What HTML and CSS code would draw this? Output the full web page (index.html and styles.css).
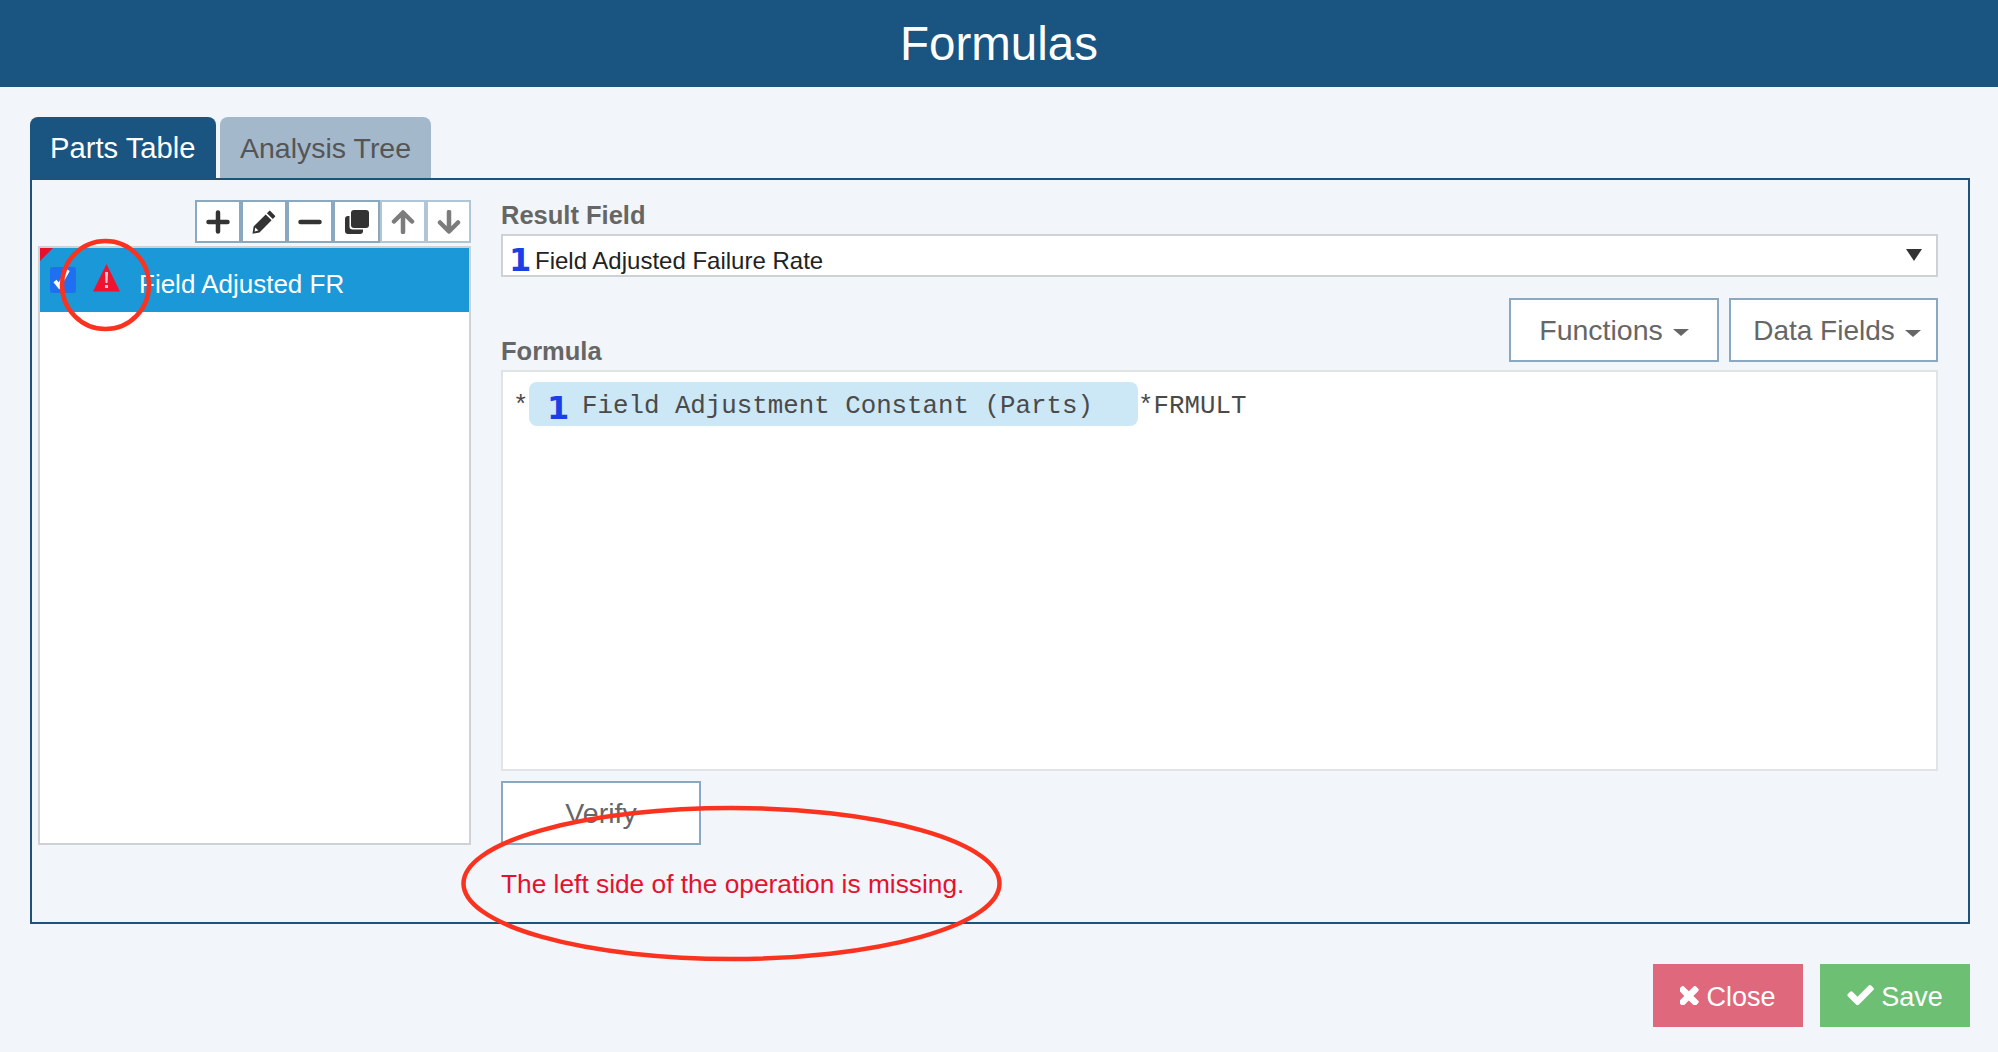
FILE: index.html
```html
<!DOCTYPE html>
<html lang="en">
<head>
<meta charset="utf-8">
<title>Formulas</title>
<link rel="stylesheet" href="styles.css">
</head>
<body>
<header class="title-bar">Formulas</header>
<main class="content">
  <nav class="tabs">
    <div class="tab tab-active">Parts Table</div>
    <div class="tab tab-second">Analysis Tree</div>
  </nav>
  <section class="panel">
    <div class="left-col">
      <div class="toolbar">
        <div class="tool"><svg class="tool-icon" viewBox="0 0 24 24"><path class="ink" d="M12 2.500v19M2.500 12h19"/></svg></div>
        <div class="tool"><svg class="tool-icon" viewBox="0 0 24 24"><path class="fill-dark" d="M18.600 1.200l4.200 4.200c.5.5.5 1.200 0 1.700l-2 2-5.900-5.900 2-2c.5-.5 1.200-.5 1.700 0zM13.700 4.400l5.900 5.900L7.500 22.400 0.500 23.800l1.100-7.300zM3.300 17.500l-.7 3.900 3.800-.8z"/></svg></div>
        <div class="tool"><svg class="tool-icon" viewBox="0 0 24 24"><path class="ink" d="M2.500 12h19"/></svg></div>
        <div class="tool tool-copy"><svg class="tool-icon" viewBox="0 0 24 24"><path class="fill-dark" d="M9 0h12a3 3 0 0 1 3 3v12a3 3 0 0 1-3 3H9a3 3 0 0 1-3-3V3a3 3 0 0 1 3-3z"/><path class="fill-dark" d="M4.500 6v10.500a3 3 0 0 0 3 3H18V21a3 3 0 0 1-3 3H3a3 3 0 0 1-3-3V9a3 3 0 0 1 3-3z"/></svg></div>
        <div class="tool tool-muted"><svg class="tool-icon" viewBox="0 0 24 24"><path class="ink ink-muted" d="M12 22V3M3 11.500L12 2.500l9 9"/></svg></div>
        <div class="tool tool-muted tool-last"><svg class="tool-icon" viewBox="0 0 24 24"><path class="ink ink-muted" d="M12 2v19M3 12.500l9 9 9-9"/></svg></div>
      </div>
      <div class="list">
        <div class="list-row">
          <svg class="check-box" viewBox="0 0 26 26"><rect width="26" height="26" rx="3" fill="#1f6ff2"/><path d="M5 14l4 5 9-16" fill="none" stroke="#fff" stroke-width="4"/></svg>
          <svg class="warn" viewBox="0 0 27 28"><path d="M13.500 0L27 27.500H0z" fill="#f0132f"/><path d="M12 8h3l-.5 11h-2zM12 21h3v3h-3z" fill="#f8c9cf"/></svg>
          <span class="row-text">Field Adjusted FR</span>
        </div>
      </div>
    </div>
    <div class="right-col">
      <div class="field-label">Result Field</div>
      <div class="select">
        <span class="one">1</span><span class="select-text">Field Adjusted Failure Rate</span>
        <span class="select-arrow"></span>
      </div>
      <div class="formula-head">
        <div class="field-label">Formula</div>
        <div class="head-buttons">
          <div class="btn btn-fn">Functions<span class="caret"></span></div>
          <div class="btn btn-data">Data Fields<span class="caret"></span></div>
        </div>
      </div>
      <div class="formula-box">
        <span class="formula-star">*</span>
        <span class="chip"><span class="one one-chip">1</span>Field Adjustment Constant (Parts)</span>
        <span>*FRMULT</span>
      </div>
      <div class="btn btn-verify">Verify</div>
      <div class="error-text">The left side of the operation is missing.</div>
    </div>
  </section>
  <footer class="footer">
    <div class="action action-close"><svg class="icon-x" viewBox="368 368 1136 1136"><path fill="#fff" d="M1490 1322q0 40-28 68l-136 136q-28 28-68 28t-68-28l-294-294-294 294q-28 28-68 28t-68-28l-136-136q-28-28-28-68t28-68l294-294-294-294q-28-28-28-68t28-68l136-136q28-28 68-28t68 28l294 294 294-294q28-28 68-28t68 28l136 136q28 28 28 68t-28 68l-294 294 294 294q28 28 28 68z"/></svg><span class="action-text">Close</span></div>
    <div class="action action-save"><svg class="icon-check" viewBox="100 400 1580 1100"><path fill="#fff" d="M1671 566q0 40-28 68l-724 724-136 136q-28 28-68 28t-68-28l-136-136-362-362q-28-28-28-68t28-68l136-136q28-28 68-28t68 28l294 295 656-657q28-28 68-28t68 28l136 136q28 28 28 68z"/></svg><span class="action-text">Save</span></div>
  </footer>
</main>
<svg class="markup" viewBox="0 0 1998 1052">
  <path d="M40 248h13L40 261z" fill="#e9102d"/>
  <ellipse cx="105.500" cy="285" rx="43.500" ry="44" class="ring"/>
  <ellipse cx="731.500" cy="883.500" rx="268" ry="75.500" class="ring"/>
</svg>
</body>
</html>
```
FILE: styles.css
```css
* { box-sizing: border-box; }
html, body { margin: 0; height: 100%; }
body {
  position: relative;
  height: 1052px;
  overflow: hidden;
  background: #f2f5f9;
  font-family: "Liberation Sans", Arial, sans-serif;
  color: #555;
}
.title-bar {
  height: 87px;
  background: #1a5480;
  color: #fff;
  font-size: 47.500px;
  line-height: 87px;
  text-align: center;
}
.content { padding: 30px 28px 0 30px; }
.tabs { display: flex; gap: 4px; height: 61px; }
.tab {
  padding: 1px 20px 0;
  background: #a3b8cb;
  color: #555;
  font-size: 29.200px;
  line-height: 61px;
  white-space: nowrap;
  border-radius: 8px 8px 0 0;
}
.tab-active { background: #1a5480; color: #fff; width: 186px; }
.tab-second { width: 211px; font-size: 28.500px; }
.panel {
  display: flex;
  gap: 30px;
  height: 746px;
  padding: 20px 30px 0 6px;
  border: 2px solid #1f5279;
}
.left-col { width: 433px; flex: none; }
.toolbar { display: flex; justify-content: flex-end; height: 43px; }
.tool {
  display: flex;
  align-items: center;
  justify-content: center;
  width: 46px;
  background: #fff;
  border: 2px solid #8aa8bf;
}
.tool-copy { width: 47px; }
.tool-muted { border-color: #b0c6d7; }
.tool-last { width: 45px; }
.tool-icon { width: 24px; height: 24px; }
.ink { fill: none; stroke: #333; stroke-width: 4.500; stroke-linecap: round; stroke-linejoin: round; }
.ink-muted { stroke: #7c7c7c; }
.fill-dark { fill: #333; fill-rule: evenodd; }
.list {
  height: 599px;
  margin-top: 3px;
  background: #fff;
  border: 2px solid #cfd2d4;
}
.list-row {
  display: flex;
  align-items: center;
  height: 64px;
  padding-left: 10px;
  background: #1a98d8;
  color: #fff;
  font-size: 26px;
}
.row-text { padding-top: 8px; }
.check-box { width: 26px; height: 26px; flex: none; }
.warn { width: 27px; height: 28px; margin: -5px 19px 0 17px; flex: none; }
.right-col { flex: 1; min-width: 0; }
.field-label {
  height: 34px;
  color: #666;
  font-size: 25.500px;
  font-weight: 700;
  line-height: 30px;
}
.select {
  display: flex;
  align-items: center;
  height: 43px;
  padding: 0 14px 0 6px;
  background: #fff;
  border: 2px solid #cfd2d4;
  color: #222;
  font-size: 24px;
}
.one {
  width: 19px;
  color: #1a3fe6;
  font-family: "DejaVu Sans", sans-serif;
  font-size: 32px;
  font-weight: 700;
  line-height: 1;
  letter-spacing: -2px;
  margin: 4px 7px -4px 0;
}
.select-text { flex: 1; padding-top: 10px; }
.select-arrow {
  width: 0;
  height: 0;
  border-left: 8px solid transparent;
  border-right: 8px solid transparent;
  border-top: 12px solid #333;
  margin-top: -2px;
}
.formula-head {
  display: flex;
  justify-content: space-between;
  align-items: flex-end;
  margin-top: 21px;
}
.formula-head .field-label { height: 26px; line-height: 30px; }
.head-buttons { display: flex; gap: 10px; }
.btn {
  display: flex;
  align-items: center;
  justify-content: center;
  width: 209px;
  height: 64px;
  background: #fff;
  border: 2px solid #8aa8bf;
  color: #666;
  font-size: 28.500px;
}
.btn-fn { width: 210px; }
.btn-data { font-size: 28px; padding: 2px 0 0 7px; }
.caret {
  width: 0;
  height: 0;
  margin: 4px 0 0 10px;
  border-left: 8px solid transparent;
  border-right: 8px solid transparent;
  border-top: 7px solid #666;
}
.formula-box {
  display: flex;
  align-items: flex-start;
  height: 401px;
  margin-top: 8px;
  padding: 10px 0 0 10px;
  background: #fff;
  border: 2px solid #e1e3e5;
  color: #4a4a4a;
  font-family: "Liberation Mono", monospace;
  font-size: 25.800px;
  line-height: 50px;
}
.formula-star { width: 16px; }
.chip {
  display: flex;
  align-items: center;
  width: 609px;
  height: 44px;
  padding: 5px 0 0 18px;
  background: #cce7f5;
  border-radius: 8px;
}
.one-chip { margin: 0 16px -2px 0; }
.btn-verify {
  width: 200px;
  height: 64px;
  margin-top: 10px;
}
.error-text {
  margin-top: 19px;
  color: #e4122f;
  font-size: 26.300px;
  line-height: 40px;
}
.footer { display: flex; justify-content: flex-end; gap: 17px; margin-top: 40px; }
.action {
  display: flex;
  align-items: center;
  justify-content: center;
  gap: 7px;
  width: 150px;
  height: 63px;
  color: #fff;
  font-size: 27px;
}
.action-text { padding-top: 4px; }
.action-close { background: #e0687c; }
.action-save { background: #6dbf74; }
.icon-x { width: 19px; height: 19px; }
.icon-check { width: 27px; height: 21px; }
.markup {
  position: absolute;
  inset: 0;
  width: 100%;
  height: 100%;
  pointer-events: none;
}
.ring { fill: none; stroke: #f9331f; stroke-width: 4.500; }
```
